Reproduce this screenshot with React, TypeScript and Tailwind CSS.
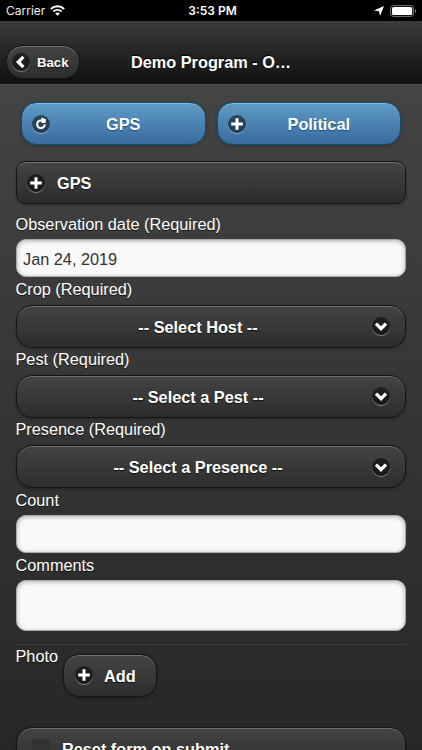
import React from 'react';
import clsx from 'clsx';

type IconName = 'plus' | 'refresh' | 'left' | 'down';

interface DiscIconProps {
  name: IconName;
  className?: string;
}

const DiscIcon: React.FC<DiscIconProps> = ({ name, className }) => (
  <span
    className={clsx(
      'flex h-[18px] w-[18px] shrink-0 items-center justify-center rounded-full bg-black/50 shadow-[0_1px_0_rgba(255,255,255,0.4)]',
      className
    )}
  >
    <svg viewBox="0 0 18 18" className="h-[18px] w-[18px]" fill="none" stroke="#fff" strokeWidth="3">
      {name === 'plus' && <path d="M9 3.2v11.6M3.2 9h11.6" />}
      {name === 'left' && <path d="M11.4 3.9 6.3 9l5.1 5.1" strokeWidth="3.3" />}
      {name === 'down' && <path d="M4 6.7l5 5 5-5" strokeWidth="3.3" />}
      {name === 'refresh' && (
        <>
          <path d="M10 5.5H9A3.8 3.8 0 1 0 12.8 9.4" strokeWidth="2.2" />
          <path d="M9.4 2.4 13.9 4.2 13.6 8H9.4z" fill="#fff" stroke="none" />
        </>
      )}
    </svg>
  </span>
);

const darkButton =
  'border border-[#141414] bg-linear-to-b from-[#444] to-[#2d2d2d] font-bold text-white shadow-[0_1px_3px_rgba(0,0,0,0.3),inset_0_1px_0_rgba(255,255,255,0.25)] [text-shadow:0_1px_1px_#111]';

const blueButton =
  'flex h-[43px] flex-1 items-center rounded-2xl border border-[#145072] bg-linear-to-b from-[#5f9cc5] to-[#396b9e] px-2.5 font-bold text-white shadow-[0_1px_3px_rgba(0,0,0,0.3),inset_0_1px_0_rgba(255,255,255,0.3)] [text-shadow:0_1px_1px_#194b7e]';

const fieldBox =
  'block w-full rounded-[10px] border border-[#aaa] bg-[#f9f9f9] px-[6px] text-[#333] outline-none shadow-[inset_0_1px_4px_rgba(0,0,0,0.3)]';

const Label: React.FC<{ children: React.ReactNode }> = ({ children }) => (
  <div className="-ml-[0.5px] h-[28px] pt-[4px] leading-[18px]">{children}</div>
);

const SelectButton: React.FC<{ label: string; text: string }> = ({ label, text }) => (
  <div className="h-[70.2px]">
    <Label>{label}</Label>
    <button
      className={clsx(
        darkButton,
        'mt-px flex h-[42.5px] w-full items-center rounded-2xl pr-[15px] pl-[15px]'
      )}
    >
      <span className="flex-1 pt-[2px] pr-[8px] text-center">{text}</span>
      <DiscIcon name="down" />
    </button>
  </div>
);

const StatusBar: React.FC = () => (
  <div className="grid h-[21px] grid-cols-3 items-center bg-black px-[6px] text-[12px] text-[#eee]">
    <div className="flex items-center gap-[5px] font-['Inter','Roboto',sans-serif] text-[12px]">
      Carrier
      <svg viewBox="0 0 15 11" className="h-[11px] w-[15px]" fill="none" stroke="#fff">
        <path d="M.9 4C4.7.3 10.3.3 14.1 4" strokeWidth="2" />
        <path d="M3.4 6.5c2.4-2.2 5.8-2.2 8.2 0" strokeWidth="1.9" />
        <path d="m7.5 10.8-2.3-2.4c1.3-1.2 3.3-1.2 4.6 0z" fill="#fff" stroke="none" />
      </svg>
    </div>
    <div className="pl-[3px] text-center font-['Inter','Roboto',sans-serif] font-semibold text-white">3:53 PM</div>
    <div className="flex items-center justify-end gap-[6px]">
      <svg viewBox="0 0 10 10" className="h-[10px] w-[10px]" fill="#fff">
        <path d="M10 0 6 10 5 5.2 0 4.4z" />
      </svg>
      <svg viewBox="0 0 27 12" className="-mr-[1px] h-[12px] w-[27px]">
        <rect x=".6" y=".6" width="23" height="10.8" rx="2.8" fill="none" stroke="#777" strokeWidth="1" />
        <rect x="2" y="2" width="20.2" height="8" rx="1.5" fill="#fff" />
        <path d="M25 4c1.6.6 1.6 3.4 0 4z" fill="#777" />
      </svg>
    </div>
  </div>
);

const Header: React.FC = () => (
  <header className="grid h-[63px] grid-cols-[1fr_160px_1fr] items-start border-b border-[#1b1b1b] bg-linear-to-b from-[#3c3c3c] to-[#111] pt-[24px]">
    <button
      className={clsx(
        darkButton,
        'ml-[6px] flex h-[34px] w-[74px] items-center rounded-full pl-[5px] text-[13.2px]'
      )}
    >
      <DiscIcon name="left" />
      <span className="ml-[7px] pt-[2px]">Back</span>
    </button>
    <h1 className="pt-[7px] text-center text-[16.3px] leading-[20px] font-bold whitespace-nowrap text-white [text-shadow:0_-1px_1px_#000]">
      Demo Program - O…
    </h1>
  </header>
);

export default function App() {
  return (
    <div className="flex h-[750px] w-[422px] flex-col overflow-hidden bg-black font-['Liberation_Sans',Arial,sans-serif] text-[16.3px] text-white">
      <StatusBar />
      <Header />
      <main className="flex-1 overflow-hidden border-t border-[#4d4d4d] bg-linear-to-b from-[#444] to-[#272727] px-4 [text-shadow:0_1px_0_#111]">
        <div className="flex gap-[11px] px-[5px] pt-[17px]">
          <button className={blueButton}>
            <DiscIcon name="refresh" />
            <span className="flex-1 pt-[2px] pr-[16px] pl-[18px] text-center">GPS</span>
          </button>
          <button className={blueButton}>
            <DiscIcon name="plus" />
            <span className="flex-1 pt-[2px] pr-[16px] pl-[18px] text-center">Political</span>
          </button>
        </div>

        <button
          className={clsx(
            darkButton,
            'mt-[16px] flex h-[43px] w-full items-center rounded-[10px] pl-[10px]'
          )}
        >
          <DiscIcon name="plus" />
          <span className="ml-[12px] pt-[2px]">GPS</span>
        </button>

        <div className="mt-[7px] h-[65px]">
          <Label>Observation date (Required)</Label>
          <input className={clsx(fieldBox, 'h-[38px] pt-[2px]')} defaultValue="Jan 24, 2019" />
        </div>

        <SelectButton label="Crop (Required)" text="-- Select Host --" />
        <SelectButton label="Pest (Required)" text="-- Select a Pest --" />
        <SelectButton label="Presence (Required)" text="-- Select a Presence --" />

        <div className="h-[65.4px]">
          <Label>Count</Label>
          <input className={clsx(fieldBox, 'h-[38px]')} />
        </div>
        <Label>Comments</Label>
        <textarea className={clsx(fieldBox, 'h-[51px] resize-none')} />

        <div className="mt-[13px] flex border-t border-[#3d3d3d]">
          <div className="-ml-[0.5px] pt-[2px] leading-[18px]">Photo</div>
          <button
            className={clsx(
              darkButton,
              'mt-[9px] ml-[5px] flex h-[43px] w-[94px] items-center rounded-2xl pl-[11px]'
            )}
          >
            <DiscIcon name="plus" />
            <span className="ml-[11px] pt-[2px]">Add</span>
          </button>
        </div>

        <label className={clsx(darkButton, 'mt-[30px] flex h-[43px] items-center rounded-2xl pl-[15px]')}>
          <span className="h-[18px] w-[18px] rounded-[3px] bg-[#333]" />
          <span className="ml-[12px] pt-[2px]">Reset form on submit</span>
        </label>
      </main>
    </div>
  );
}
